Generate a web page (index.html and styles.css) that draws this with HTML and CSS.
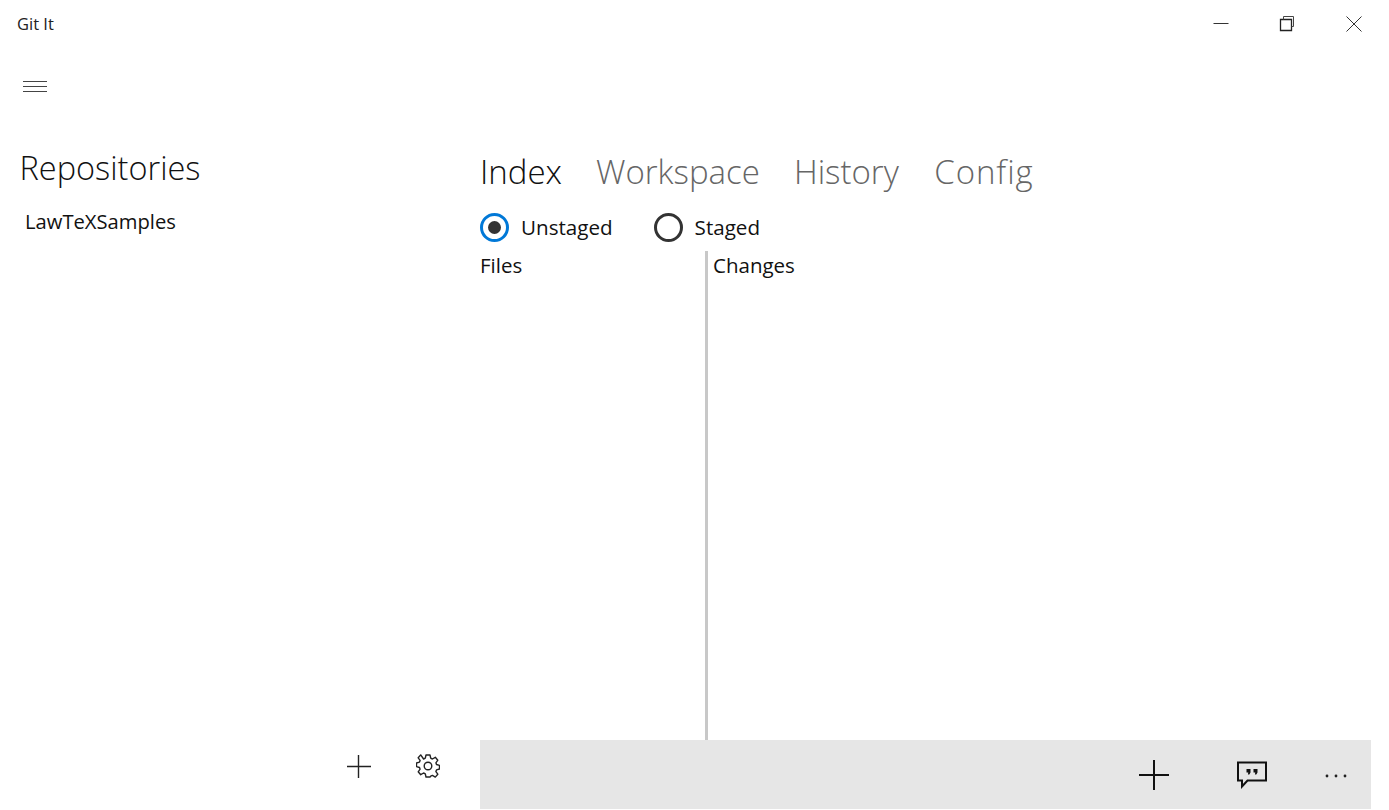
FILE: index.html
```html
<!DOCTYPE html>
<html lang="en"><head>
<meta charset="UTF-8">
<title>Git It</title>
<link rel="stylesheet" href="styles.css">
</head>
<body>
<div class="titlebar">
  <span class="apptitle">Git It</span>
  <div class="winbtns">
    <button class="winbtn"><svg width="16" height="16" viewBox="0 0 16 16"><path d="M.5 7.500h15" stroke="#333" fill="none"/></svg></button>
    <button class="winbtn"><svg width="16" height="16" viewBox="0 0 16 16"><path d="M1.500 3.500h11v11h-11z" stroke="#222" stroke-width="1.300" fill="none"/><path d="M4.500 3.500V.5h10v10h-2" stroke="#444" fill="none"/></svg></button>
    <button class="winbtn"><svg width="16" height="16" viewBox="0 0 16 16"><path d="M.5.500l15 15M15.500.500l-15 15" stroke="#333" fill="none"/></svg></button>
  </div>
</div>
<div class="main">
  <div class="left">
    <button class="hamburger"><svg width="24" height="12" viewBox="0 0 24 12"><path d="M0 1.500h24M0 6.500h24M0 11.500h24" stroke="#444" fill="none"/></svg></button>
    <h1>Repositories</h1>
    <div class="repo">LawTeXSamples</div>
    <div class="leftfoot">
      <button class="iconbtn"><svg width="24" height="24" viewBox="0 0 24 24"><path d="M11.500 1v24M0 12.500h24" stroke="#222" stroke-width="1.400" fill="none"/></svg></button>
      <button class="iconbtn"><svg width="24" height="24" viewBox="0 0 24 24"><circle cx="12" cy="12" r="3.800" stroke="#222" stroke-width="1.400" fill="none"/><path d="M10 1h4l.7 3.200 1.700.8 2.900-1.700 2.500 2.900-1.900 2.600.6 1.700 3 .9v3.600l-3 .9-.6 1.700 1.900 2.600-2.500 2.900-2.900-1.700-1.700.8L14 23h-4l-.7-3.200-1.700-.8-2.900 1.700-2.500-2.900 1.900-2.600-.6-1.700-3-.9v-3.600l3-.9.600-1.700-1.900-2.600 2.500-2.900L7.600 5l1.700-.8z" stroke="#222" stroke-width="1.400" stroke-linejoin="round" fill="none"/></svg></button>
    </div>
  </div>
  <div class="right">
    <div class="tabs">
      <span class="tab active">Index</span>
      <span class="tab">Workspace</span>
      <span class="tab">History</span>
      <span class="tab config">Config</span>
    </div>
    <div class="radios">
      <label class="radio"><span class="dot on"></span>Unstaged</label>
      <label class="radio"><span class="dot"></span>Staged</label>
    </div>
    <div class="split">
      <div class="files">Files</div>
      <div class="changes">Changes</div>
    </div>
    <div class="cmdbar">
      <button class="cmd"><svg width="30" height="30" viewBox="0 0 30 30"><path d="M15 0v30M0 15h30" stroke="#111" stroke-width="2" fill="none"/></svg></button>
      <button class="cmd"><svg width="30" height="28" viewBox="0 0 30 28"><path d="M1 1.500h28v18H10.500L5 25.500v-6H1z" stroke="#111" stroke-width="2" fill="none"/><path d="M9.500 8h4v3.500l-1.200 2h-1.400l.4-2H9.500zM16.500 8h4v3.500l-1.200 2h-1.400l.4-2h-1.800z" fill="#111"/></svg></button>
      <button class="cmd more"><svg width="22" height="4" viewBox="0 0 22 4"><circle cx="2" cy="2" r="1.400" fill="#222"/><circle cx="11" cy="2" r="1.400" fill="#222"/><circle cx="20" cy="2" r="1.400" fill="#222"/></svg></button>
    </div>
  </div>
</div>
</body></html>
```

FILE: styles.css
```css
html, body {
  margin: 0;
  height: 100%;
}

body {
  display: flex;
  flex-direction: column;
  height: 810px;
  overflow: hidden;
  background: white;
  color: #111;
  font-family: "Open Sans", "Noto Sans", sans-serif;
}

button {
  background: none;
  border: none;
  padding: 0;
  display: flex;
  align-items: center;
  justify-content: center;
}

.titlebar {
  display: flex;
  justify-content: space-between;
  height: 48px;
  flex: none;
}

.apptitle {
  font-size: 16.500px;
  line-height: 47px;
  margin-left: 17px;
  color: #222;
}

.winbtns {
  display: flex;
  margin-right: 1.700px;
}

.winbtn {
  width: 66.670px;
  height: 48px;
}

.main {
  flex: 1;
  display: flex;
  min-height: 0;
}

.left {
  width: 480px;
  flex: none;
  display: flex;
  flex-direction: column;
}

.hamburger {
  width: 24px;
  height: 12px;
  margin: 32px 0 0 23px;
}

h1 {
  font-size: 32.500px;
  font-weight: 300;
  line-height: 44px;
  margin: 54px 0 0 19.500px;
}

.repo {
  font-size: 20.200px;
  line-height: 28px;
  margin: 17px 0 0 25px;
}

.leftfoot {
  margin-top: auto;
  display: flex;
  justify-content: flex-end;
  gap: 45px;
  padding: 0 40px 32px 0;
}

.iconbtn {
  width: 24px;
  height: 24px;
}

.right {
  width: 891px;
  flex: none;
  display: flex;
  flex-direction: column;
}

.tabs {
  display: flex;
  gap: 34px;
  margin-top: 99px;
  height: 50px;
  font-size: 33px;
  line-height: 50px;
  font-weight: 300;
}

.tab {
  color: #666;
}

.tab.active {
  color: #111;
}

.tab.config {
  margin-left: 1.500px;
  letter-spacing: .9px;
}

.radios {
  display: flex;
  gap: 41px;
  margin-top: 15px;
  height: 30px;
}

.radio {
  display: flex;
  align-items: center;
  gap: 12px;
  font-size: 20.600px;
  line-height: 32px;
}

.dot {
  width: 29px;
  height: 29px;
  box-sizing: border-box;
  border: 3px solid #333;
  border-radius: 50%;
  display: flex;
  align-items: center;
  justify-content: center;
}

.dot.on {
  border-color: #0078d7;
}

.dot.on::after {
  content: "";
  width: 13px;
  height: 13px;
  border-radius: 50%;
  background: #333;
}

.split {
  flex: 1;
  display: flex;
  margin-top: 9px;
  font-size: 20.500px;
  line-height: 28px;
}

.files {
  width: 225px;
  box-sizing: border-box;
}

.changes {
  flex: 1;
  border-left: 3px solid #c8c8c8;
  padding-left: 5px;
}

.cmdbar {
  height: 69px;
  flex: none;
  margin-bottom: 1px;
  background: #e6e6e6;
  display: flex;
  justify-content: flex-end;
  align-items: stretch;
}

.cmd {
  width: 98px;
  box-sizing: border-box;
  padding-top: 1px;
}

.cmd.more {
  width: 70px;
  padding-top: 2px;
}
```
